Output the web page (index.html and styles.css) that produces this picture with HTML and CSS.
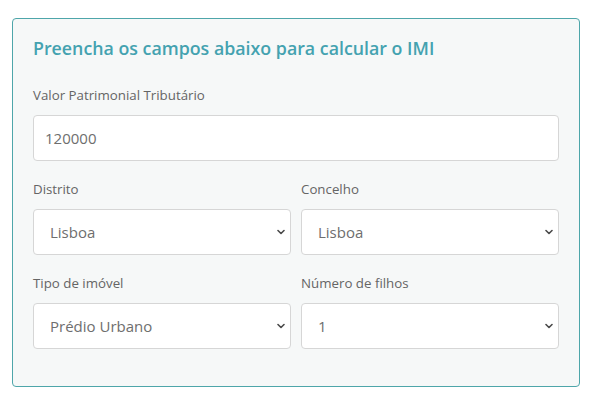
FILE: index.html
```html
<!DOCTYPE html>
<html lang="pt">
<head>
<meta charset="utf-8">
<title>Simulador IMI</title>
<link rel="stylesheet" href="styles.css">
</head>
<body>
<form class="card">
  <h2 class="title">Preencha os campos abaixo para calcular o IMI</h2>
  <div class="field">
    <label class="label" for="vpt">Valor Patrimonial Tributário</label>
    <input class="input" id="vpt" type="text" value="120000">
  </div>
  <div class="row">
    <div class="field">
      <label class="label" for="distrito">Distrito</label>
      <div class="select-wrap">
        <select class="select" id="distrito"><option>Lisboa</option></select>
        <svg class="chev" width="8" height="6" viewBox="0 0 8 6"><path d="M1 1.5 L4 4.5 L7 1.5" fill="none" stroke="#4a4a4a" stroke-width="1.6" stroke-linecap="round" stroke-linejoin="round"/></svg>
      </div>
    </div>
    <div class="field">
      <label class="label" for="concelho">Concelho</label>
      <div class="select-wrap">
        <select class="select" id="concelho"><option>Lisboa</option></select>
        <svg class="chev" width="8" height="6" viewBox="0 0 8 6"><path d="M1 1.5 L4 4.5 L7 1.5" fill="none" stroke="#4a4a4a" stroke-width="1.6" stroke-linecap="round" stroke-linejoin="round"/></svg>
      </div>
    </div>
  </div>
  <div class="row">
    <div class="field">
      <label class="label" for="tipo">Tipo de imóvel</label>
      <div class="select-wrap">
        <select class="select" id="tipo"><option>Prédio Urbano</option></select>
        <svg class="chev" width="8" height="6" viewBox="0 0 8 6"><path d="M1 1.5 L4 4.5 L7 1.5" fill="none" stroke="#4a4a4a" stroke-width="1.6" stroke-linecap="round" stroke-linejoin="round"/></svg>
      </div>
    </div>
    <div class="field">
      <label class="label" for="filhos">Número de filhos</label>
      <div class="select-wrap">
        <select class="select" id="filhos"><option>1</option></select>
        <svg class="chev" width="8" height="6" viewBox="0 0 8 6"><path d="M1 1.5 L4 4.5 L7 1.5" fill="none" stroke="#4a4a4a" stroke-width="1.6" stroke-linecap="round" stroke-linejoin="round"/></svg>
      </div>
    </div>
  </div>
</form>
</body>
</html>
```
FILE: styles.css
```css
html, body {
  margin: 0;
  padding: 0;
  background: #ffffff;
}
body {
  padding: 18px 13px 0 12px;
  font-family: "Open Sans", "Lato", sans-serif;
}
.card {
  width: 568px;
  box-sizing: border-box;
  border: 1px solid #4ea6aa;
  border-radius: 4px;
  background: #f6f8f8;
  padding: 17px 20px 37px 20px;
}
.title {
  margin: 0 0 26px 0;
  font-size: 17.8px;
  line-height: 24px;
  font-weight: 600;
  color: #44a2b0;
}
.field {
  display: flex;
  flex-direction: column;
}
.row {
  display: grid;
  grid-template-columns: 1fr 1fr;
  column-gap: 10px;
  margin-top: 19px;
}
.label {
  font-size: 13.3px;
  line-height: 18px;
  color: #656565;
  margin-bottom: 11px;
}
.input, .select {
  box-sizing: border-box;
  height: 46px;
  width: 100%;
  border: 1px solid #d6d6d6;
  border-radius: 4px;
  background: #ffffff;
  font-family: inherit;
  font-size: 15px;
  color: #6e6e6e;
  margin: 0;
}
.input {
  padding: 0 11px;
}
.select {
  appearance: none;
  -webkit-appearance: none;
  padding: 0 16px;
}
.select-wrap {
  position: relative;
}
.chev {
  position: absolute;
  right: 6px;
  top: 20px;
  pointer-events: none;
}
```
